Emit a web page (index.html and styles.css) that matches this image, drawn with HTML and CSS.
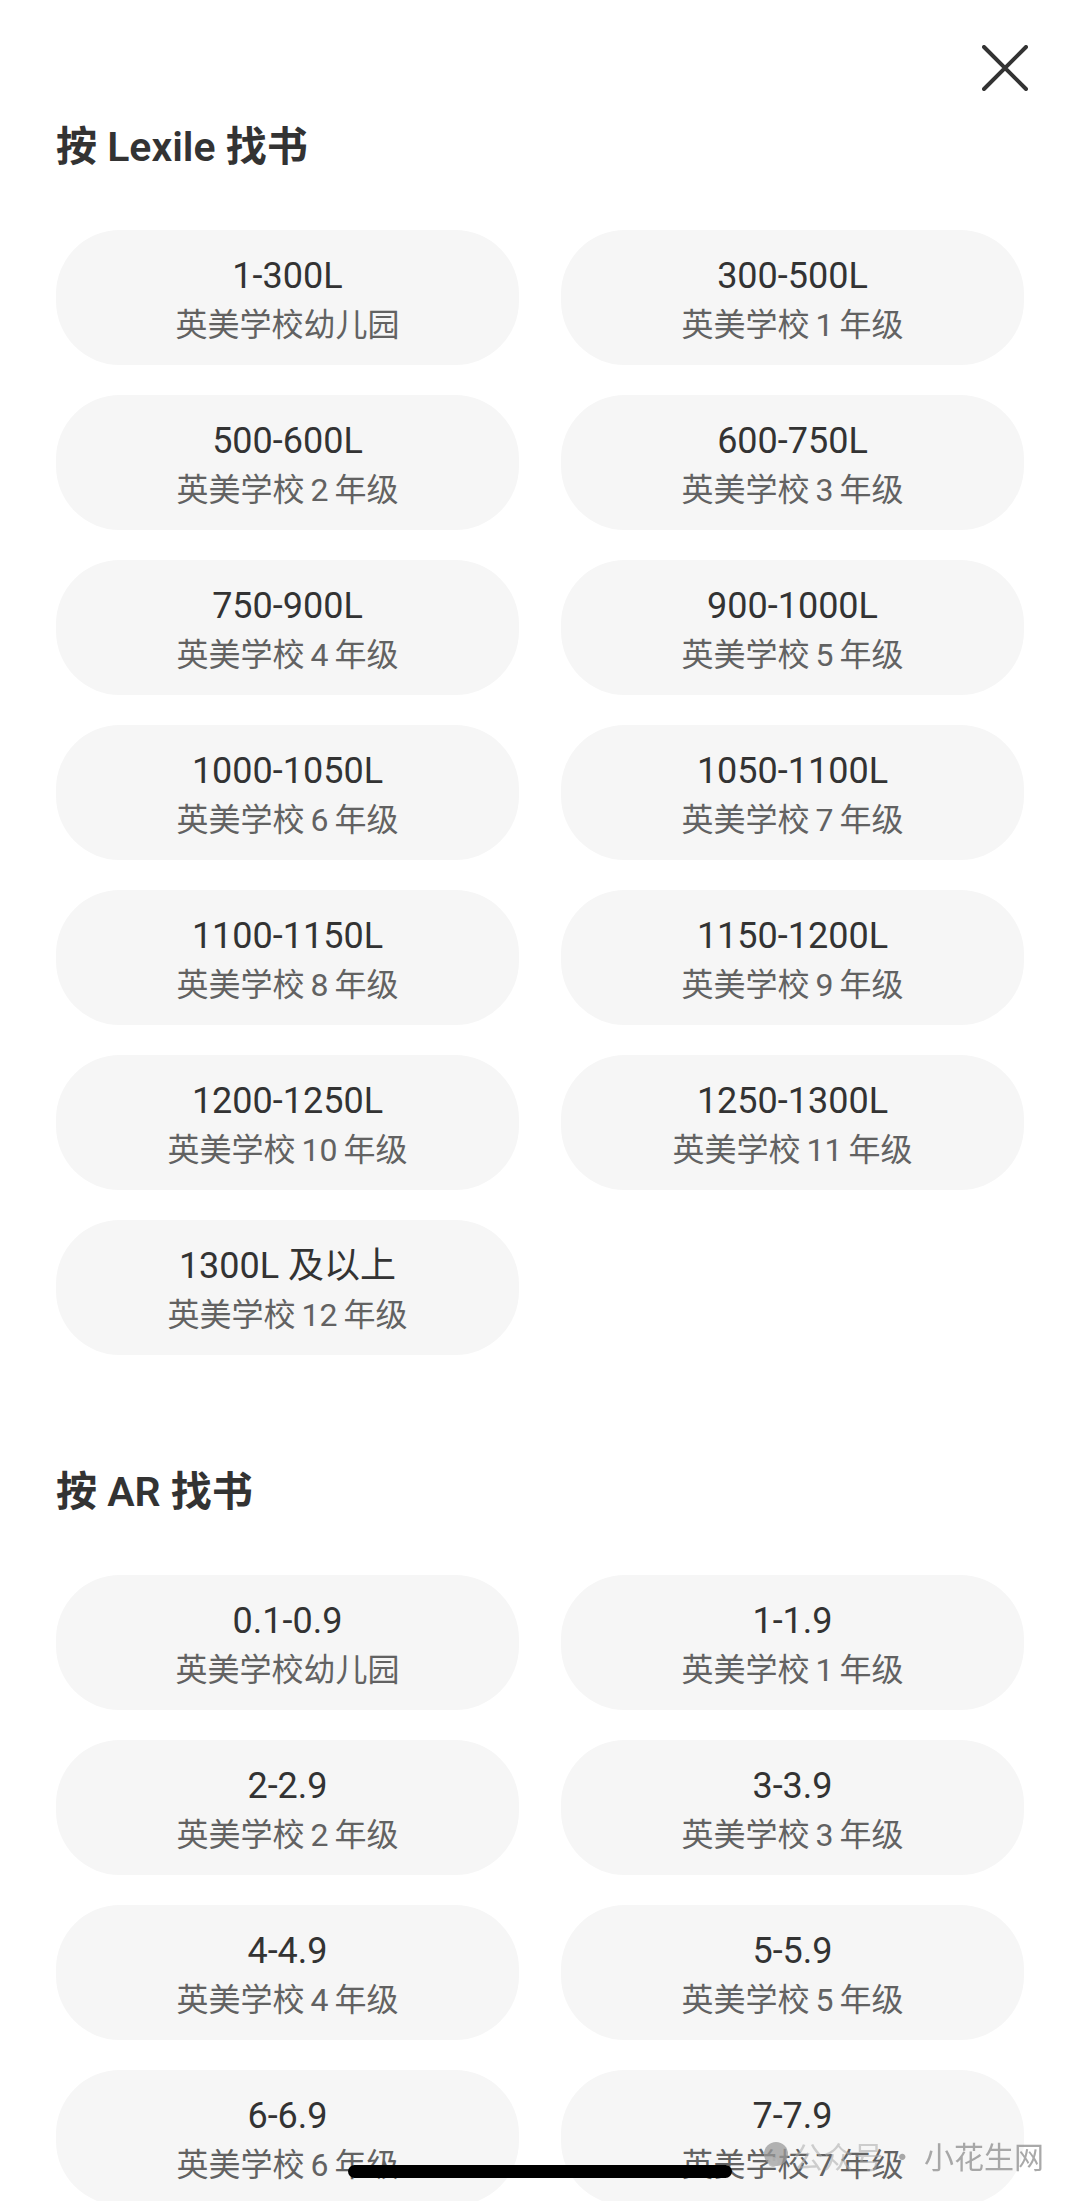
FILE: index.html
```html
<!DOCTYPE html>
<html lang="zh-CN">
<head>
  <meta charset="UTF-8">
  <title>按级别找书</title>
  <link rel="stylesheet" href="styles.css">
</head>
<body>
  <div class="sheet">
    <div class="top">
      <button class="close" aria-label="关闭">
        <svg width="46" height="46" viewBox="0 0 46 46">
          <path d="M2 2 L44 44 M44 2 L2 44" stroke="#333" stroke-width="4" stroke-linecap="round" fill="none"/>
        </svg>
      </button>
    </div>

    <h2 class="title">按 Lexile 找书</h2>
    <div class="grid">
      <a class="level"><b>1-300L</b><span>英美学校幼儿园</span></a>
      <a class="level"><b>300-500L</b><span>英美学校<i>1</i>年级</span></a>
      <a class="level"><b>500-600L</b><span>英美学校<i>2</i>年级</span></a>
      <a class="level"><b>600-750L</b><span>英美学校<i>3</i>年级</span></a>
      <a class="level"><b>750-900L</b><span>英美学校<i>4</i>年级</span></a>
      <a class="level"><b>900-1000L</b><span>英美学校<i>5</i>年级</span></a>
      <a class="level"><b>1000-1050L</b><span>英美学校<i>6</i>年级</span></a>
      <a class="level"><b>1050-1100L</b><span>英美学校<i>7</i>年级</span></a>
      <a class="level"><b>1100-1150L</b><span>英美学校<i>8</i>年级</span></a>
      <a class="level"><b>1150-1200L</b><span>英美学校<i>9</i>年级</span></a>
      <a class="level"><b>1200-1250L</b><span>英美学校<i>10</i>年级</span></a>
      <a class="level"><b>1250-1300L</b><span>英美学校<i>11</i>年级</span></a>
      <a class="level"><b>1300L 及以上</b><span>英美学校<i>12</i>年级</span></a>
    </div>

    <h2 class="title ar">按 AR 找书</h2>
    <div class="grid">
      <a class="level"><b>0.1-0.9</b><span>英美学校幼儿园</span></a>
      <a class="level"><b>1-1.9</b><span>英美学校<i>1</i>年级</span></a>
      <a class="level"><b>2-2.9</b><span>英美学校<i>2</i>年级</span></a>
      <a class="level"><b>3-3.9</b><span>英美学校<i>3</i>年级</span></a>
      <a class="level"><b>4-4.9</b><span>英美学校<i>4</i>年级</span></a>
      <a class="level"><b>5-5.9</b><span>英美学校<i>5</i>年级</span></a>
      <a class="level"><b>6-6.9</b><span>英美学校<i>6</i>年级</span></a>
      <a class="level"><b>7-7.9</b><span>英美学校<i>7</i>年级</span></a>
    </div>
  </div>

  <div class="watermark">
    <svg class="logo" width="26" height="28" viewBox="0 0 26 28">
      <circle cx="13" cy="13" r="12" fill="#9a9a9a" fill-opacity="0.75"/>
      <circle cx="10" cy="21" r="5" fill="#b5b5b5" fill-opacity="0.8"/>
    </svg>
    <span class="wm-light">公众号</span>
    <span>· 小花生网</span>
  </div>
  <div class="home-bar"></div>
</body>
</html>
```

FILE: styles.css
```css
body {
  margin: 0;
  background: #fff;
  font-family: Roboto, "Noto Sans CJK SC", sans-serif;
  color: #333;
}
.sheet {
  padding: 0 56px;
}
.top {
  display: flex;
  justify-content: flex-end;
  padding-top: 45px;
  margin-right: -4px;
}
.close {
  border: 0;
  padding: 0;
  background: none;
  width: 46px;
  height: 46px;
}
.close svg {
  display: block;
}
.title {
  margin: 28px 0 0;
  font-size: 41px;
  line-height: 56px;
  font-weight: 600;
  color: #333;
}
.title.ar {
  margin-top: 109px;
}
.grid {
  display: grid;
  grid-template-columns: 1fr 1fr;
  column-gap: 42px;
  row-gap: 30px;
  margin-top: 55px;
}
.level {
  height: 135px;
  border-radius: 64px;
  background: #f6f6f6;
  display: flex;
  flex-direction: column;
  align-items: center;
  justify-content: center;
  padding-top: 4px;
  box-sizing: border-box;
}
.level b {
  font-weight: 400;
  font-size: 36px;
  line-height: 50px;
  color: #333;
}
.level span {
  font-size: 32px;
  line-height: 48px;
  color: #626262;
}
.level i {
  font-style: normal;
  margin: 0 6px;
}
.watermark {
  position: fixed;
  right: 36px;
  bottom: 24px;
  display: flex;
  align-items: center;
  gap: 4px;
  font-family: "Noto Sans CJK SC", sans-serif;
  font-size: 30px;
  color: rgba(140, 140, 140, 0.75);
}
.wm-light {
  color: rgba(170, 170, 170, 0.55);
}
.home-bar {
  position: fixed;
  left: 348px;
  bottom: 23px;
  width: 384px;
  height: 13px;
  border-radius: 7px;
  background: #000;
}
```
